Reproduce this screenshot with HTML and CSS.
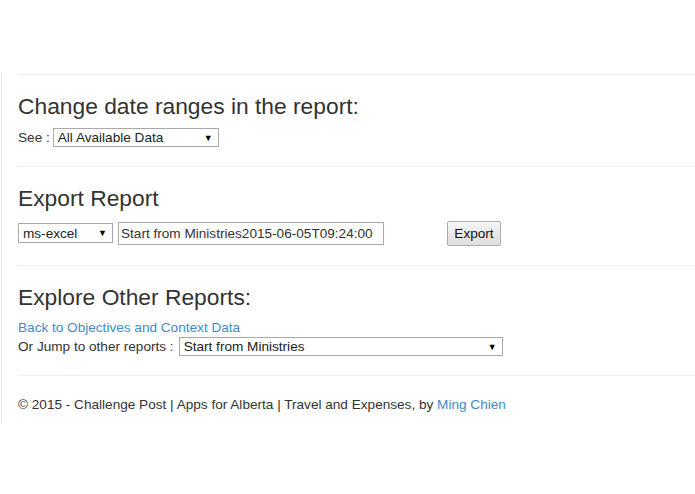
FILE: index.html
```html
<!DOCTYPE html>
<html>
<head>
<meta charset="utf-8">
<title>Report</title>
<link rel="stylesheet" href="styles.css">
</head>
<body>
<div class="page">
  <hr class="rule first">
  <section class="block">
    <h3 class="title">Change date ranges in the report:</h3>
    <div class="row">
      <span class="label">See :</span>
      <span class="pick pick-range">
        <select><option>All Available Data</option></select>
      </span>
    </div>
  </section>
  <hr class="rule">
  <section class="block">
    <h3 class="title">Export Report</h3>
    <div class="row export-row">
      <span class="pick pick-format">
        <select><option>ms-excel</option></select>
      </span>
      <input class="filename" type="text" value="Start from Ministries2015-06-05T09:24:00">
      <button class="btn">Export</button>
    </div>
  </section>
  <hr class="rule">
  <section class="block">
    <h3 class="title">Explore Other Reports:</h3>
    <div class="back"><a class="link" href="#">Back to Objectives and Context Data</a></div>
    <div class="row jump-row">
      <span class="label label-jump">Or Jump to other reports :</span>
      <span class="pick pick-jump">
        <select><option>Start from Ministries</option></select>
      </span>
    </div>
  </section>
  <hr class="rule">
  <footer class="footer">
    <p>&copy; 2015 - Challenge Post | Apps for Alberta | Travel and Expenses, by <a class="link" href="#">Ming Chien</a></p>
  </footer>
</div>
</body>
</html>
```

FILE: styles.css
```css
html, body {
  margin: 0;
  padding: 0;
  background: #fff;
}
body {
  font-family: "Liberation Sans", Arial, sans-serif;
  font-size: 13.6px;
  line-height: 19px;
  color: #333;
  overflow: hidden;
}
.page {
  margin: 72px 0 0 1px;
  padding: 2px 0 0 16px;
  border-left: 1px solid #e6e6e6;
}
.rule {
  border: 0;
  border-top: 1px solid #eee;
  margin: 19px 0;
  height: 0;
}
.rule.first {
  margin-top: 0;
  margin-bottom: 18.5px;
}
.title {
  font-size: 22.8px;
  font-weight: 400;
  line-height: 25px;
  margin: 19px 0 9.5px;
  color: #333;
}
.rule.first + .block .title {
  margin-top: 18.5px;
}
.row {
  display: flex;
  align-items: center;
}
.label {
  margin-right: 3px;
}
.label-jump {
  margin-right: 5px;
}
.pick {
  position: relative;
  display: inline-block;
}
.pick select {
  -webkit-appearance: none;
  appearance: none;
  font-family: "Liberation Sans", Arial, sans-serif;
  font-size: 13.6px;
  color: #222;
  background: #fff;
  border: 1px solid #a9a9a9;
  border-radius: 0;
  padding: 0 20px 0 4px;
  margin: 0;
  display: block;
  box-sizing: border-box;
}
.pick::after {
  content: "\25BC";
  position: absolute;
  right: 6px;
  top: 50%;
  transform: translateY(-50%);
  font-size: 9px;
  line-height: 9px;
  color: #000;
  pointer-events: none;
}
.pick-range select {
  width: 166px;
  height: 19px;
}
.pick-format select {
  width: 95px;
  height: 20px;
}
.pick-jump select {
  width: 324px;
  height: 19px;
}
.filename {
  font-family: "Liberation Sans", Arial, sans-serif;
  font-size: 13.6px;
  color: #333;
  width: 266px;
  height: 23px;
  box-sizing: border-box;
  border: 1px solid #a9a9a9;
  padding: 0 2px;
  margin: 0 0 0 5px;
}
.btn {
  font-family: "Liberation Sans", Arial, sans-serif;
  font-size: 13.6px;
  color: #111;
  width: 54px;
  height: 25px;
  margin-left: 63px;
  padding: 0;
  border: 1px solid #adadad;
  border-radius: 2px;
  background: linear-gradient(#f6f6f6, #dedede);
}
.export-row {
  height: 25px;
}
.link {
  color: #428bca;
  text-decoration: none;
}
.back {
  line-height: 18px;
}
.footer p {
  margin: 0;
  padding-bottom: 10px;
}
```
